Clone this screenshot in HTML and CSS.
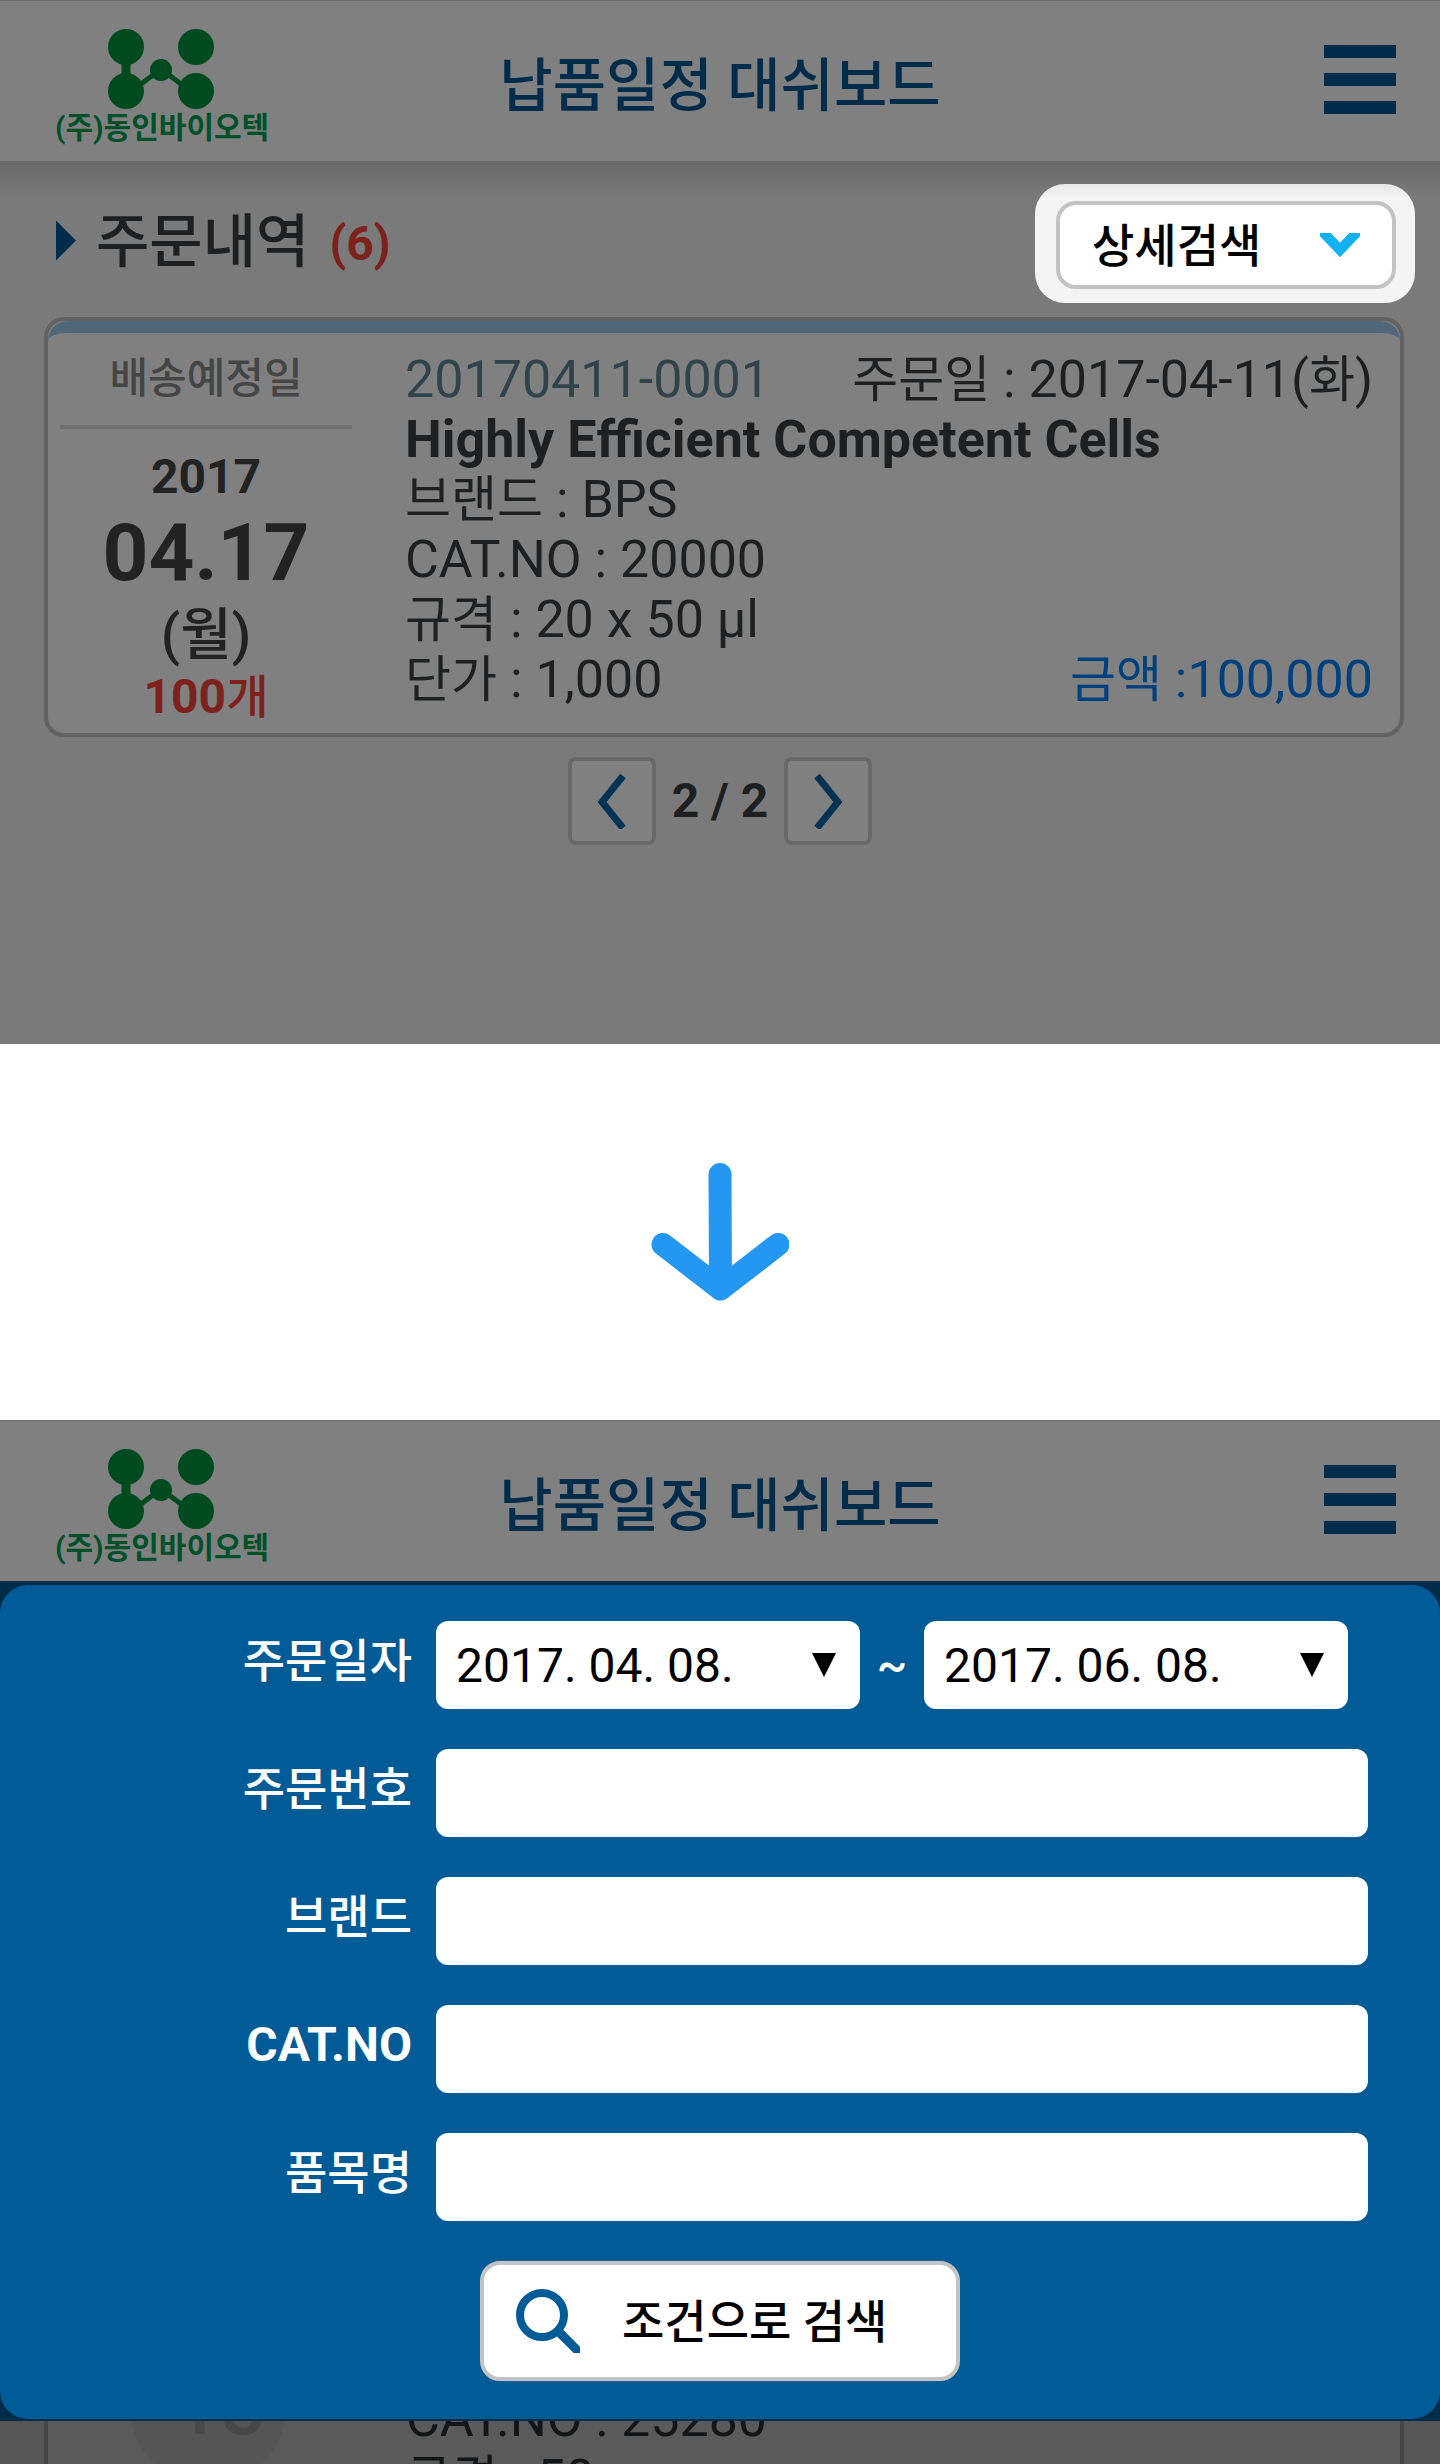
FILE: index.html
```html
<!DOCTYPE html>
<html lang="ko">
<head>
<meta charset="utf-8">
<meta name="viewport" content="width=device-width, initial-scale=1">
<title>납품일정 대쉬보드</title>
<link rel="stylesheet" href="styles.css">
</head>
<body>
<section class="screen screen-list">
  <header class="topbar">
    <a class="logo" href="#">
      <svg class="logo-mark" width="110" height="82" viewBox="0 0 110 82" aria-hidden="true">
        <g fill="#004a1f" stroke="#004a1f">
          <path d="M19 19V63" stroke-width="9" fill="none"/>
          <path d="M34 56L54 41L74 56" stroke-width="5" fill="none"/>
          <g stroke="none">
            <circle cx="19" cy="19" r="18"/><circle cx="89" cy="19" r="18"/>
            <circle cx="19" cy="63" r="18"/><circle cx="89" cy="63" r="18"/>
            <circle cx="54" cy="42" r="11"/>
          </g>
        </g>
      </svg>
      <span class="logo-name">(주)동인바이오텍</span>
    </a>
    <h1 class="topbar-title">납품일정 대쉬보드</h1>
    <button class="menu" type="button" aria-label="메뉴"><span class="menu-bar"></span><span class="menu-bar"></span><span class="menu-bar"></span></button>
  </header>
  <main class="orders">
    <div class="orders-head">
      <span class="marker"></span>
      <h2 class="orders-title">주문내역</h2>
      <span class="orders-count">(6)</span>
      <div class="spotlight">
        <button class="detail-search" type="button">
          <span class="btn-text">상세검색</span>
          <svg width="40" height="24" viewBox="0 0 40 24" aria-hidden="true"><path d="M2 -2L20 17L38 -2" fill="none" stroke="#11b2f2" stroke-width="10"/></svg>
        </button>
      </div>
    </div>
    <article class="card">
      <div class="card-body">
        <div class="delivery">
          <p class="delivery-label">배송예정일</p>
          <p class="delivery-year">2017</p>
          <p class="delivery-day">04.17</p>
          <p class="delivery-weekday">(월)</p>
          <p class="delivery-qty">100<span class="qty-unit">개</span></p>
        </div>
        <div class="details">
          <p class="row"><a class="order-no" href="#">20170411-0001</a><span><span class="ko">주문일</span> : 2017-04-11(<span class="ko">화</span>)</span></p>
          <p class="row product">Highly Efficient Competent Cells</p>
          <p class="row"><span><span class="ko">브랜드</span> : BPS</span></p>
          <p class="row">CAT.NO : 20000</p>
          <p class="row"><span><span class="ko">규격</span> : 20 x 50 µl</span></p>
          <p class="row"><span><span class="ko">단가</span> : 1,000</span><span class="amount"><span class="ko">금액</span> :100,000</span></p>
        </div>
      </div>
    </article>
    <nav class="pager" aria-label="페이지">
      <button class="page-btn" type="button" aria-label="이전"><svg width="28" height="56" viewBox="0 0 28 56"><path d="M25 3L4 29L25 55" fill="none" stroke="#023354" stroke-width="7"/></svg></button>
      <span class="page-now">2 / 2</span>
      <button class="page-btn" type="button" aria-label="다음"><svg width="28" height="56" viewBox="0 0 28 56"><path d="M3 3L24 29L3 55" fill="none" stroke="#023354" stroke-width="7"/></svg></button>
    </nav>
  </main>
</section>

<div class="step">
  <svg width="138" height="138" viewBox="0 0 138 138" aria-hidden="true"><path d="M69 11.500L69.500 126M12 81.500L69.500 126L127 81.500" fill="none" stroke="#2497f3" stroke-width="23" stroke-linecap="round" stroke-linejoin="round"/></svg>
</div>

<section class="screen screen-search">
  <header class="topbar">
    <a class="logo" href="#">
      <svg class="logo-mark" width="110" height="82" viewBox="0 0 110 82" aria-hidden="true">
        <g fill="#004a1f" stroke="#004a1f">
          <path d="M19 19V63" stroke-width="9" fill="none"/>
          <path d="M34 56L54 41L74 56" stroke-width="5" fill="none"/>
          <g stroke="none">
            <circle cx="19" cy="19" r="18"/><circle cx="89" cy="19" r="18"/>
            <circle cx="19" cy="63" r="18"/><circle cx="89" cy="63" r="18"/>
            <circle cx="54" cy="42" r="11"/>
          </g>
        </g>
      </svg>
      <span class="logo-name">(주)동인바이오텍</span>
    </a>
    <h1 class="topbar-title">납품일정 대쉬보드</h1>
    <button class="menu" type="button" aria-label="메뉴"><span class="menu-bar"></span><span class="menu-bar"></span><span class="menu-bar"></span></button>
  </header>
  <div class="panel-back">
    <form class="panel">
      <div class="field">
        <label class="field-label" for="from">주문일자</label>
        <div class="dates">
          <div class="date"><select class="date-select" id="from"><option>2017. 04. 08.</option></select></div>
          <span class="tilde">~</span>
          <div class="date"><select class="date-select" id="to" aria-label="종료일"><option>2017. 06. 08.</option></select></div>
        </div>
      </div>
      <div class="field"><label class="field-label" for="order">주문번호</label><input class="text-input" id="order" type="text"></div>
      <div class="field"><label class="field-label" for="brand">브랜드</label><input class="text-input" id="brand" type="text"></div>
      <div class="field"><label class="field-label latin" for="cat">CAT.NO</label><input class="text-input" id="cat" type="text"></div>
      <div class="field"><label class="field-label" for="item">품목명</label><input class="text-input" id="item" type="text"></div>
      <button class="submit" type="button">
        <svg width="64" height="64" viewBox="0 0 64 64" aria-hidden="true"><g fill="none" stroke="#005b97"><circle cx="26" cy="26" r="22" stroke-width="8"/><path d="M42 42L64 64" stroke-width="9"/></g></svg>
        <span class="btn-text">조건으로 검색</span>
      </button>
    </form>
  </div>
  <div class="behind">
    <div class="behind-card">
      <div class="behind-date">18</div>
      <div class="behind-details">
        <p class="row">CAT.NO : 25280</p>
        <p class="row"><span><span class="ko">규격</span> : 50</span></p>
      </div>
    </div>
  </div>
</section>
</body>
</html>
```
FILE: styles.css
```css
* { box-sizing: border-box; }

body {
  margin: 0;
  background: #fff;
  color: #1d1f20;
  font-family: Roboto, "Noto Sans CJK KR", sans-serif;
}

h1, h2, p { margin: 0; font-weight: 500; }
a { text-decoration: none; }
button, input, select { font: inherit; margin: 0; }

.screen { display: flex; flex-direction: column; }
.screen-list { padding-bottom: 199px; background: #7a7a7a; }

/* Header bar */
.topbar {
  display: grid;
  grid-template-columns: 1fr auto 1fr;
  height: 161px;
  padding: 0 44px;
  border-top: 1px solid #6c6c6c;
  background: #808080;
}
.logo {
  display: flex;
  flex-direction: column;
  align-items: center;
  justify-self: start;
  padding: 27px 0 0 11px;
  color: #00502a;
}
.logo-name { font-size: 30px; font-weight: 700; line-height: 36px; }
.topbar-title {
  padding-top: 10px;
  color: #002c4b;
  font-size: 58px;
  line-height: 150px;
}
.menu {
  display: flex;
  flex-direction: column;
  justify-content: space-between;
  justify-self: end;
  width: 72px;
  height: 69px;
  margin-top: 44px;
  padding: 0;
  border: 0;
  background: none;
}
.menu-bar { height: 13px; background: #002c4b; }

/* Order list */
.orders { background: linear-gradient(#696969, #707070 16px, #7a7a7a 36px); }
.orders-head {
  display: flex;
  align-items: center;
  padding: 23px 25px 14px 56px;
}
.marker {
  width: 20px;
  height: 40px;
  margin-bottom: 6px;
  background: #002c4b;
  clip-path: polygon(0 0, 100% 50%, 0 100%);
}
.orders-title { margin: 0 0 4px 20px; font-size: 58px; line-height: 72px; }
.orders-count { margin: 0 auto 0 20px; color: #7d211c; font-size: 48px; font-weight: 700; line-height: 72px; }
.spotlight {
  padding: 17px 19px 14px 21px;
  border-radius: 30px;
  background: linear-gradient(#e8e8e8, #f4f4f4 16px);
}
.detail-search {
  display: flex;
  align-items: center;
  justify-content: space-between;
  width: 340px;
  height: 88px;
  padding: 0 32px;
  border: 4px solid #c3c3c3;
  border-radius: 20px;
  background: #fff;
  color: #000;
  font-size: 46px;
  font-weight: 500;
}
.btn-text { padding-bottom: 6px; }

.card {
  margin: 0 36px 0 44px;
  border: 4px solid #626262;
  border-radius: 20px;
  background: #808080;
}
.card-body {
  display: grid;
  grid-template-columns: 292px 1fr;
  gap: 53px;
  padding: 16px 27px 16px 12px;
  border-top: 12px solid #50677a;
  border-radius: 20px 20px 0 0;
}
.delivery { color: #222; text-align: center; }
.delivery-label {
  margin-bottom: 12px;
  padding-bottom: 16px;
  border-bottom: 4px solid #707070;
  color: #454545;
  font-size: 42px;
  line-height: 60px;
}
.delivery-year { font-size: 48px; font-weight: 700; line-height: 72px; }
.delivery-day { font-size: 80px; font-weight: 700; line-height: 80px; }
.delivery-weekday { font-size: 56px; line-height: 84px; }
.delivery-qty { color: #7d211c; font-size: 48px; font-weight: 700; line-height: 40px; }
.qty-unit { font-size: 46px; font-weight: 500; }
.details { padding-top: 1px; }

.row {
  display: flex;
  justify-content: space-between;
  font-size: 52px;
  font-weight: 400;
  line-height: 60px;
  white-space: nowrap;
}
.ko { font-size: 50px; line-height: 1; }
.product { font-weight: 700; }
.order-no { color: #31434a; }
.amount { color: #00417d; }

.pager {
  display: flex;
  align-items: center;
  justify-content: center;
  gap: 16px;
  padding-top: 20px;
}
.page-btn {
  display: grid;
  place-items: center;
  width: 88px;
  height: 88px;
  padding: 0;
  border: 4px solid #686868;
  border-radius: 8px;
  background: #808080;
}
.page-now { font-size: 48px; font-weight: 700; line-height: 60px; }

/* Arrow between the two steps */
.step { display: flex; justify-content: center; padding: 119px 0; }
.step svg { display: block; }

/* Search panel */
.panel-back { padding: 4px 0 2px; background: #002c4b; }
.panel {
  display: flex;
  flex-direction: column;
  gap: 40px;
  padding: 36px 72px 38px 0;
  border-radius: 28px;
  background: #005b97;
}
.field {
  display: grid;
  grid-template-columns: 412px 1fr;
  gap: 24px;
}
.field-label {
  color: #fff;
  font-size: 46px;
  font-weight: 500;
  line-height: 80px;
  text-align: right;
}
.latin { font-size: 48px; font-weight: 700; }
.text-input {
  width: 100%;
  height: 88px;
  padding: 0 22px;
  border: 0;
  border-radius: 12px;
  background: #fff;
  font-size: 48px;
}
.dates {
  display: grid;
  grid-template-columns: 1fr 64px 1fr;
  padding-right: 20px;
}
.date { display: grid; align-items: center; }
.date-select {
  grid-area: 1 / 1;
  width: 100%;
  height: 88px;
  padding: 0 20px;
  border: 0;
  border-radius: 12px;
  background: #fff;
  color: #000;
  font-size: 48px;
  appearance: none;
}
.date::after {
  content: "";
  grid-area: 1 / 1;
  justify-self: end;
  width: 24px;
  height: 24px;
  margin-right: 24px;
  background: #000;
  clip-path: polygon(0 0, 100% 0, 50% 100%);
  pointer-events: none;
}
.tilde { color: #fff; font-size: 46px; font-weight: 500; line-height: 88px; text-align: center; }
.submit {
  display: flex;
  align-items: center;
  align-self: center;
  gap: 42px;
  width: 480px;
  height: 120px;
  margin-left: 72px;
  padding: 0 32px;
  border: 4px solid #c3c3c3;
  border-radius: 20px;
  background: #fff;
  color: #000;
  font-size: 46px;
  font-weight: 500;
}

/* Order card that shows under the panel */
.behind { height: 43px; overflow: hidden; padding: 0 36px 0 44px; background: #565656; }
.behind-card {
  display: grid;
  grid-template-columns: 156px 1fr;
  gap: 120px;
  padding-left: 82px;
  border: solid #464646;
  border-width: 0 4px;
  background: #5a5a5a;
}
.behind-date {
  height: 156px;
  margin-top: -92px;
  padding-left: 24px;
  border-radius: 50%;
  background: #555;
  color: #484848;
  font-size: 80px;
  font-weight: 500;
  line-height: 156px;
  text-align: center;
}
.behind-details { margin-top: -32px; color: #141516; }
```
